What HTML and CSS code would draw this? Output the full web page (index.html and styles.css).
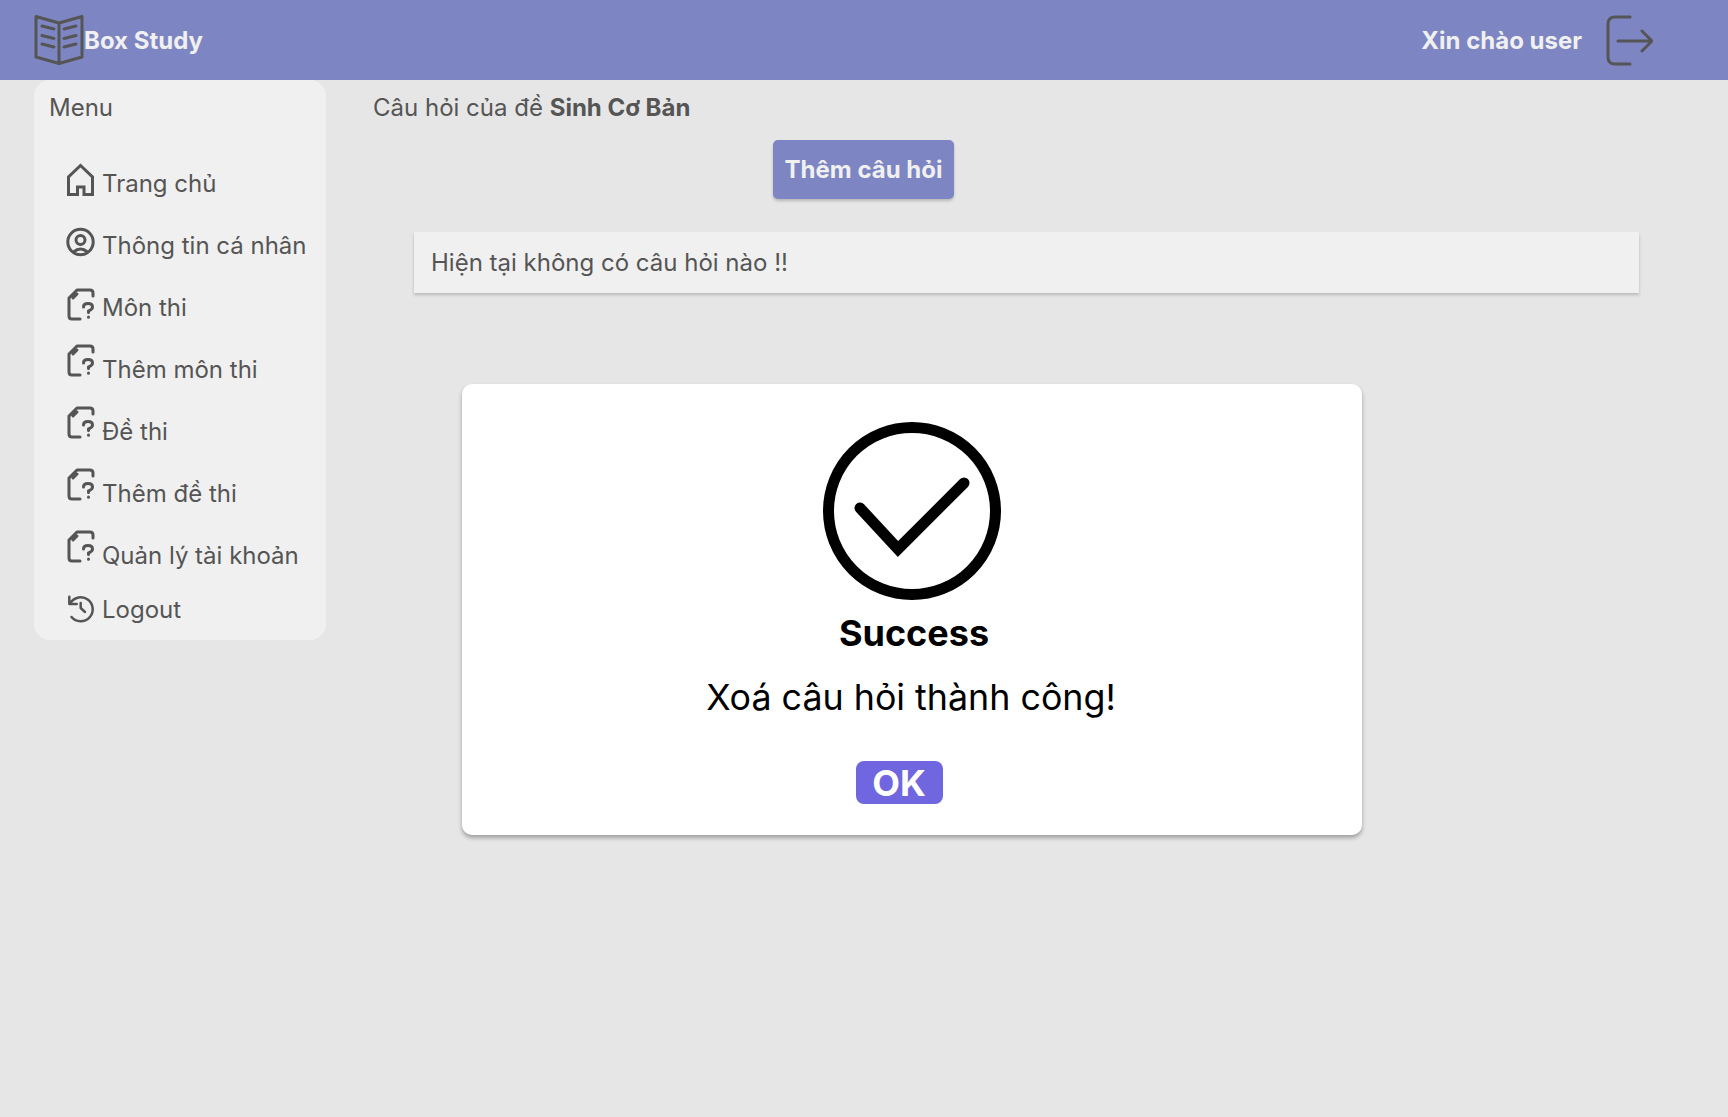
FILE: index.html
```html
<!DOCTYPE html>
<html lang="en">
<head>
  <meta charset="UTF-8">
  <title>Box Study</title>
  <link rel="stylesheet" href="styles.css">
</head>
<body>

  <header class="topbar">
    <div class="brand">
      <svg class="brand-icon" width="50" height="52" viewBox="0 0 50 52">
        <path d="M2 2.500 L25 9 L48 2.500 V43 L25 49.500 L2 43 Z M25 9 V49.500 M8 12 L20 15 M8 21.500 L20 24.500 M8 30 L20 33 M30 15 L42 12 M30 24.500 L42 21.500 M30 33 L42 30"/>
      </svg>
      <span class="topbar-text">Box Study</span>
    </div>
    <div class="user">
      <span class="topbar-text">Xin chào user</span>
      <svg class="logout-icon" width="48" height="52" viewBox="0 0 48 52">
        <path d="M25 3 H10 Q3 3 3 10 V43 Q3 50 10 50 H25 M13 27 H47 M37 17 L47 27 L37 37"/>
      </svg>
    </div>
  </header>

  <div class="layout">
    <aside class="sidebar">
      <div class="menu-title">Menu</div>
      <nav class="menu">
        <a class="menu-item">
          <svg class="icon icon-home" width="32" height="36" viewBox="0 -1 32 36"><path d="M4.500 31.500 V14 L16.500 2.500 L28.500 14 V31.500 H20 V24 H13.500 V31.500 Z"/></svg>
          <span>Trang chủ</span>
        </a>
        <a class="menu-item">
          <svg class="icon" width="32" height="36" viewBox="0 0 32 36"><circle cx="16.500" cy="18" r="12.700"/><circle cx="16.500" cy="16" r="4.500"/><path d="M9.500 28 Q16.500 22 23.500 28"/></svg>
          <span>Thông tin cá nhân</span>
        </a>
        <a class="menu-item">
          <svg class="icon" width="32" height="36" viewBox="0 0 32 36"><use href="#doc"/></svg>
          <span>Môn thi</span>
        </a>
        <a class="menu-item">
          <svg class="icon icon-raised" width="32" height="36" viewBox="0 0 32 36"><use href="#doc"/></svg>
          <span>Thêm môn thi</span>
        </a>
        <a class="menu-item">
          <svg class="icon icon-raised" width="32" height="36" viewBox="0 0 32 36"><use href="#doc"/></svg>
          <span>Đề thi</span>
        </a>
        <a class="menu-item">
          <svg class="icon icon-raised" width="32" height="36" viewBox="0 0 32 36"><use href="#doc"/></svg>
          <span>Thêm đề thi</span>
        </a>
        <a class="menu-item">
          <svg class="icon icon-raised" width="32" height="36" viewBox="0 0 32 36"><use href="#doc"/></svg>
          <span>Quản lý tài khoản</span>
        </a>
        <a class="menu-item menu-item-last">
          <svg class="icon icon-history" width="32" height="36" viewBox="0 0 32 36"><path d="M5.300 8.700 V16 H12.700 M6.500 15 A12 12 0 1 1 7.500 29 M16.700 15 V20 L21 24"/></svg>
          <span>Logout</span>
        </a>
      </nav>
    </aside>

    <main class="content">
      <div class="page-title">Câu hỏi của đề <b>Sinh Cơ Bản</b></div>
      <div class="actions">
        <button class="add-btn">Thêm câu hỏi</button>
      </div>
      <div class="empty">Hiện tại không có câu hỏi nào !!</div>
    </main>
  </div>

  <div class="modal">
    <svg class="modal-icon" width="180" height="180" viewBox="0 0 180 180">
      <circle cx="90" cy="90" r="83.500"/>
      <path d="M38 87 L76 128 L142 62"/>
    </svg>
    <h2 class="modal-title">Success</h2>
    <p class="modal-text">Xoá câu hỏi thành công!</p>
    <button class="ok-btn">OK</button>
  </div>

  <svg class="defs" width="0" height="0">
    <defs>
      <g id="doc">
        <path d="M29 10 V7 Q29 4 26 4 H13 L5 12 V30 Q5 33 8 33 H16 M9 12 L13 8"/>
        <path d="M19.500 21 Q19.500 17.500 24 17.500 Q28.500 17.500 28.500 21 Q28.500 23.500 24.500 25 V26.500 M24.500 31 V31.200"/>
      </g>
    </defs>
  </svg>

</body>
</html>
```

FILE: styles.css
```css
* {
  box-sizing: border-box;
}

body {
  margin: 0;
  min-height: 1117px;
  background-color: #e6e6e6;
  font-family: Inter, sans-serif;
  font-size: 24px;
  color: #555;
  position: relative;
}

.topbar {
  height: 80px;
  background-color: #7d86c2;
  color: #f0f0f0;
  display: flex;
  justify-content: space-between;
  align-items: center;
  padding: 0 75px 0 34px;
  font-weight: 700;
}

.topbar-text {
  margin-top: 1px;
}

.brand, .user {
  display: flex;
  align-items: center;
}

.user {
  gap: 23px;
}

.brand-icon, .logout-icon {
  fill: none;
  stroke: #555;
  stroke-width: 3;
  stroke-linecap: round;
  stroke-linejoin: round;
}

.layout {
  display: flex;
}

.sidebar {
  width: 292px;
  height: 560px;
  margin-left: 34px;
  padding: 11px 15px;
  background-color: #f0f0f0;
  border-radius: 16px;
}

.menu-title {
  height: 34px;
  line-height: 34px;
}

.menu {
  margin-top: 11px;
  padding-left: 15px;
}

.menu-item {
  display: flex;
  align-items: flex-end;
  gap: 6px;
  height: 62px;
  white-space: nowrap;
}

.menu-item-last {
  height: 54px;
}

.icon {
  flex-shrink: 0;
  fill: none;
  stroke: #555;
  stroke-width: 3;
  stroke-linecap: round;
  stroke-linejoin: round;
}

.icon-raised {
  margin-bottom: 6px;
}

.icon-home {
  stroke-linecap: square;
  stroke-linejoin: miter;
}

.icon-history {
  stroke-width: 2.500;
}

.content {
  flex: 1;
  padding: 11px 89px 0 47px;
}

.page-title {
  height: 34px;
  line-height: 34px;
}

.actions {
  margin-top: 15px;
  padding-left: 400px;
}

.add-btn {
  width: 181px;
  height: 59px;
  border: none;
  border-radius: 5px;
  background-color: #7d86c2;
  color: #f0f0f0;
  font-family: inherit;
  font-size: 24px;
  font-weight: 700;
  box-shadow: 0 2px 3px rgba(0,0,0,0.2);
}

.empty {
  margin: 33px 0 0 41px;
  height: 61px;
  line-height: 61px;
  padding-left: 17px;
  background-color: #f0f0f0;
  box-shadow: 0 2px 3px rgba(0,0,0,0.2);
}

.modal {
  position: absolute;
  left: 462px;
  top: 384px;
  width: 900px;
  height: 451px;
  background: white;
  border-radius: 10px;
  box-shadow: 0 3px 4px rgba(0,0,0,0.3);
  color: black;
  display: flex;
  flex-direction: column;
  align-items: center;
  padding-top: 37px;
}

.modal-icon {
  fill: none;
  stroke: black;
  stroke-width: 11;
  stroke-linecap: round;
}

.modal-title {
  margin: 10px 0 0 4px;
  font-size: 36px;
  font-weight: 700;
  line-height: 44px;
}

.modal-text {
  margin: 20px 2px 0 0;
  font-size: 35.800px;
  line-height: 44px;
}

.ok-btn {
  margin: 42px 0 0 -26px;
  width: 87px;
  height: 43px;
  padding: 0;
  border: none;
  border-radius: 8px;
  background-color: #7066e0;
  color: white;
  font-family: inherit;
  font-size: 36px;
  font-weight: 700;
}

.defs {
  position: absolute;
}
```
